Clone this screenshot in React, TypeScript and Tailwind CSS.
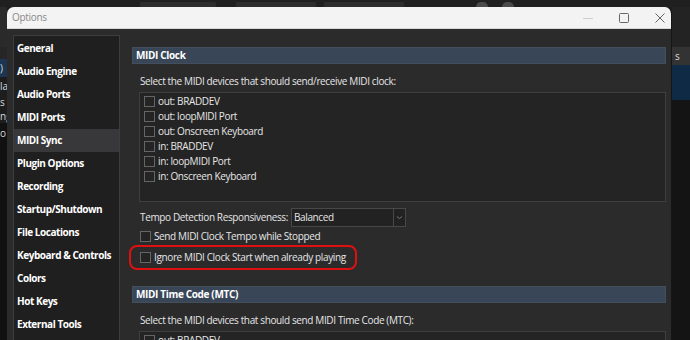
import React from 'react'

const NAV = [
  'General',
  'Audio Engine',
  'Audio Ports',
  'MIDI Ports',
  'MIDI Sync',
  'Plugin Options',
  'Recording',
  'Startup/Shutdown',
  'File Locations',
  'Keyboard & Controls',
  'Colors',
  'Hot Keys',
  'External Tools',
]

const CLOCK_DEVICES = [
  'out: BRADDEV',
  'out: loopMIDI Port',
  'out: Onscreen Keyboard',
  'in: BRADDEV',
  'in: loopMIDI Port',
  'in: Onscreen Keyboard',
]

const font = { fontFamily: "'Open Sans', 'Noto Sans', sans-serif" }

function Box() {
  return <span className="inline-block w-[11px] h-[11px] border border-[#656565] bg-[#242424] shrink-0" />
}

function Header({ title }: { title: string }) {
  return (
    <div className="h-[17px] bg-[#394658] border border-[#444f5e] flex items-center pl-[3px] text-[10px] font-bold tracking-[-0.35px] text-white whitespace-nowrap">
      {title}
    </div>
  )
}

export default function App() {
  return (
    <div className="relative w-[690px] h-[340px] overflow-hidden bg-[#1d1d1d]" style={font}>
      {/* app behind the dialog */}
      <div className="absolute left-0 top-0 w-full h-[7px] bg-[#202020] flex items-end">
        <div className="ml-[140px] w-[76px] h-[5px] bg-[#2d2d2d] rounded-t-[2px]" />
        <div className="ml-[20px] w-[80px] h-[5px] bg-[#2d2d2d] rounded-t-[2px]" />
        <div className="ml-[8px] w-[80px] h-[5px] bg-[#2d2d2d] rounded-t-[2px]" />
        <div className="ml-[72px] w-[12px] h-[5px] bg-[#4a4a4a] rounded-t-full" />
        <div className="ml-[14px] w-[12px] h-[5px] bg-[#4a4a4a] rounded-t-full" />
      </div>
      <div className="absolute left-0 top-[7px] w-[7px] h-[333px] flex flex-col overflow-hidden whitespace-nowrap text-[10px] text-[#d8d8d8] leading-none">
        <div className="h-[40px] shrink-0 bg-[#2a2a2a]" />
        <div className="h-[12px] shrink-0 bg-[#262626]" />
        <div className="h-[18px] shrink-0 bg-[#1b3552] flex items-center">)</div>
        <div className="h-[18px] shrink-0 flex items-center">la</div>
        <div className="h-[14px] shrink-0 flex items-center">s -</div>
        <div className="h-[14px] shrink-0 flex items-center">ng</div>
        <div className="h-[20px] shrink-0 bg-[#111] flex items-center">o</div>
        <div className="flex-1 bg-[#111]" />
      </div>
      <div className="absolute right-0 top-[7px] w-[18px] h-[333px] flex flex-col text-[10px] text-[#d8d8d8] leading-none">
        <div className="h-[40px] shrink-0 bg-[#232323]" />
        <div className="h-[18px] shrink-0 bg-[#333] flex items-center pl-[3px]">s</div>
        <div className="h-[35px] shrink-0 bg-[#0e2a45]" />
        <div className="flex-1 bg-[#141414]" />
      </div>

      {/* Options dialog */}
      <div className="absolute left-[7px] top-[7px] w-[665px] h-[333px] flex flex-col rounded-t-[7px] overflow-hidden border-r border-[#151515]">
        <div className="h-[22px] shrink-0 bg-[#f3f3f3] flex items-center border-b border-[#d6d6d6]">
          <span className="ml-[5px] text-[10px] text-[#8a8a8a] tracking-[-0.3px]">Options</span>
          <div className="ml-auto flex items-center">
            <svg width="12" height="12" viewBox="0 0 12 12" className="mr-[24px]">
              <path d="M1 6.5h10" stroke="#cfcfcf" strokeWidth="1" />
            </svg>
            <svg width="12" height="12" viewBox="0 0 12 12" className="mr-[24px]">
              <rect x="1.5" y="1.5" width="9" height="9" rx="1" fill="none" stroke="#666" strokeWidth="1" />
            </svg>
            <svg width="12" height="12" viewBox="0 0 12 12" className="mr-[5px]">
              <path d="M1.5 1.5l9 9M10.5 1.5l-9 9" stroke="#666" strokeWidth="1" />
            </svg>
          </div>
        </div>

        <div className="flex-1 min-h-0 overflow-hidden bg-[#2b2b2c] flex pl-[6px] pt-[6px] pr-[5px]">
          {/* nav */}
          <div className="w-[107px] h-[320px] bg-[#1f1f1f] border border-[#3d3d3d] pt-px shrink-0">
            {NAV.map(item => (
              <div
                key={item}
                className={`h-[23px] flex items-center pl-[3px] text-[10px] font-bold tracking-[-0.45px] text-white whitespace-nowrap ${item === 'MIDI Sync' ? 'bg-[#38383a]' : ''}`}
              >
                {item}
              </div>
            ))}
          </div>

          {/* page */}
          <div className="flex-1 ml-[12px] pt-[12px] text-[10px] tracking-[-0.37px] text-[#e6e6e6] whitespace-nowrap">
            <Header title="MIDI Clock" />
            <div className="h-[26px] flex items-end pl-[8px] pb-[1px]">
              Select the MIDI devices that should send/receive MIDI clock:
            </div>
            <div className="ml-[7px] mt-[2px] h-[110px] bg-[#242424] border border-[#3f3f3f] pt-[1px]">
              {CLOCK_DEVICES.map(d => (
                <div key={d} className="h-[15px] flex items-center gap-[3px] pl-[4px]">
                  <Box />
                  <span>{d}</span>
                </div>
              ))}
            </div>

            <div className="mt-[6px] h-[19px] flex items-center pl-[8px]">
              <span>Tempo Detection Responsiveness:</span>
              <div className="ml-[3px] w-[115px] h-[19px] bg-[#222] border border-[#484848] flex items-center">
                <span className="flex-1 pl-[2px]">Balanced</span>
                <div className="w-[12px] h-full border-l border-[#484848] flex items-center justify-center">
                  <svg width="7" height="5" viewBox="0 0 7 5">
                    <path d="M1 1.5l2.5 2 2.5-2" stroke="#777" fill="none" strokeWidth="1" />
                  </svg>
                </div>
              </div>
            </div>

            <div className="h-[19px] flex items-center gap-[3px] pl-[8px]">
              <Box />
              <span>Send MIDI Clock Tempo while Stopped</span>
            </div>

            <div className="-mt-[1px] -ml-[3px] w-[228px] h-[25px] border-2 border-[#e01010] rounded-[8px] flex items-center gap-[3px] pl-[9px]">
              <Box />
              <span>Ignore MIDI Clock Start when already playing</span>
            </div>

            <div className="mt-[16px]">
              <Header title="MIDI Time Code (MTC)" />
            </div>
            <div className="h-[26px] flex items-end pl-[8px] pb-[1px]">
              Select the MIDI devices that should send MIDI Time Code (MTC):
            </div>
            <div className="ml-[7px] mt-[2px] h-[60px] bg-[#242424] border border-[#3f3f3f] pt-[1px]">
              <div className="h-[15px] flex items-center gap-[3px] pl-[4px]">
                <Box />
                <span>out: BRADDEV</span>
              </div>
            </div>
          </div>
        </div>
      </div>
    </div>
  )
}
